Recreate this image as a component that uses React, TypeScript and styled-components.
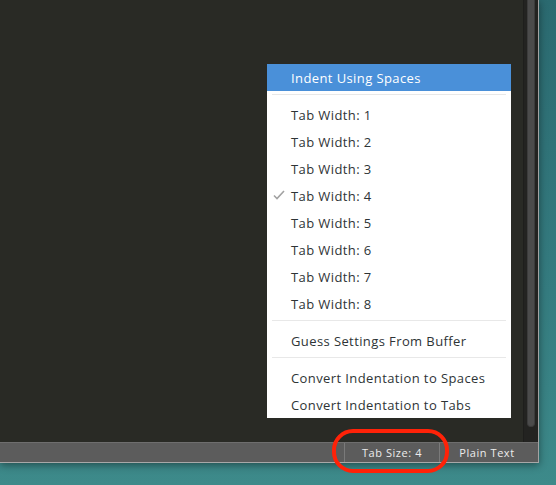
import React from "react";
import styled, { createGlobalStyle } from "styled-components";

const Global = createGlobalStyle`
  html, body { margin: 0; padding: 0; }
  body {
    width: 556px;
    height: 485px;
    overflow: hidden;
    background: linear-gradient(180deg, #2b6a70 0%, #357c80 60%, #3d8a8a 100%);
    font-family: "Open Sans", "Noto Sans", sans-serif;
  }
`;

const Stage = styled.div`
  position: relative;
  width: 556px;
  height: 485px;
`;

const Window = styled.div`
  width: 538px;
  height: 462px;
  display: flex;
  flex-direction: column;
  border-right: 1px solid #a3a3a3;
  border-bottom: 1px solid #a8a8a8;
  box-shadow: 0 2px 8px rgba(0, 0, 0, 0.45);
  background: #292a25;
`;

const Main = styled.div`
  flex: 1;
  display: flex;
  min-height: 0;
`;

const Editor = styled.div`
  flex: 1;
  background: #292a25;
`;

const Track = styled.div`
  width: 15px;
  background: #232321;
  border-left: 1px solid #1e1e1c;
  display: flex;
  justify-content: center;
  padding-bottom: 6px;
  box-sizing: border-box;
`;

const Thumb = styled.div`
  width: 8px;
  margin-top: -10px;
  background: #4b4b4b;
  border-radius: 0 0 4px 4px;
  border: 1px solid #3c3c3c;
  border-top: none;
  box-sizing: border-box;
`;

const StatusBar = styled.div`
  height: 19px;
  display: flex;
  justify-content: flex-end;
  background: #5c5c5c;
  border-top: 1px solid #6e6e6e;
  box-sizing: content-box;
`;

const StatusItem = styled.div<{ $w: number; $shift?: number }>`
  width: ${(p) => p.$w}px;
  border-left: 1px solid #7a7a7a;
  display: flex;
  align-items: center;
  justify-content: center;
  padding-right: ${(p) => p.$shift ?? 0}px;
  box-sizing: border-box;
  color: #ececec;
  font-size: 11px;
  letter-spacing: 0.55px;
`;

const Menu = styled.div`
  position: absolute;
  left: 267px;
  top: 64px;
  width: 244px;
  background: #ffffff;
  display: flex;
  flex-direction: column;
`;

const Item = styled.div<{ $active?: boolean }>`
  position: relative;
  height: 27px;
  display: flex;
  align-items: center;
  padding-left: 24px;
  font-size: 13px;
  letter-spacing: 0.4px;
  color: ${(p) => (p.$active ? "#ffffff" : "#2e3436")};
  background: ${(p) => (p.$active ? "#4a90d9" : "transparent")};
`;

const Separator = styled.div`
  height: 10px;
  display: flex;
  flex-direction: column;
  padding: 3px 5px 0;
  box-sizing: border-box;
  &::before {
    content: "";
    height: 1px;
    background: #e8e8e8;
  }
`;

const Check = styled.svg`
  position: absolute;
  left: 6px;
  top: 8px;
`;

const Annotation = styled.div`
  position: absolute;
  left: 332px;
  top: 429px;
  width: 117px;
  height: 44px;
  box-sizing: border-box;
  border: 4px solid #ff2208;
  border-radius: 21px;
`;

const widths = [1, 2, 3, 4, 5, 6, 7, 8];

export default function App() {
  return (
    <Stage>
      <Global />
      <Window>
        <Main>
          <Editor />
          <Track>
            <Thumb style={{ height: 437 }} />
          </Track>
        </Main>
        <StatusBar>
          <StatusItem $w={95}>Tab Size: 4</StatusItem>
          <StatusItem $w={99} $shift={4}>Plain Text</StatusItem>
        </StatusBar>
      </Window>
      <Menu>
        <Item $active>Indent Using Spaces</Item>
        <Separator />
        {widths.map((n) => (
          <Item key={n}>
            {n === 4 && (
              <Check width="12" height="10" viewBox="0 0 12 10">
                <polyline
                  points="1,5.5 4,8.5 11,1"
                  fill="none"
                  stroke="#a2a2a2"
                  strokeWidth="1.6"
                />
              </Check>
            )}
            Tab Width: {n}
          </Item>
        ))}
        <Separator />
        <Item>Guess Settings From Buffer</Item>
        <Separator />
        <Item>Convert Indentation to Spaces</Item>
        <Item>Convert Indentation to Tabs</Item>
      </Menu>
      <Annotation />
    </Stage>
  );
}
